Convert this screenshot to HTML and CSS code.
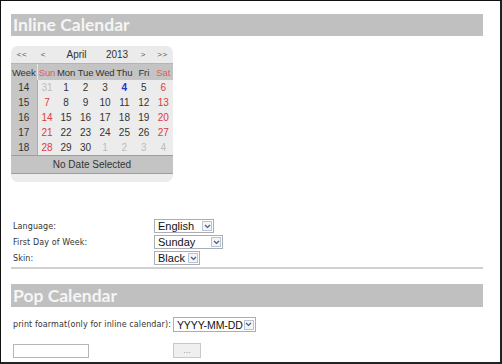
FILE: index.html
```html
<!DOCTYPE html>
<html>
<head>
<meta charset="utf-8">
<title>Calendar</title>
<link rel="stylesheet" href="styles.css">
</head>
<body>
<div class="frame">
  <h2 class="bar">Inline Calendar</h2>

  <div class="cal">
    <div class="cal-nav">
      <span class="n1">&lt;&lt;</span>
      <span class="n2">&lt;</span>
      <span class="n3">April</span>
      <span class="n4">2013</span>
      <span class="n5">&gt;</span>
      <span class="n6">&gt;&gt;</span>
    </div>
    <table class="cal-grid">
      <colgroup>
        <col class="c-week"><col><col><col><col><col><col><col>
      </colgroup>
      <thead>
        <tr class="head">
          <th class="wk">Week</th><th class="we first">Sun</th><th>Mon</th><th>Tue</th><th>Wed</th><th>Thu</th><th>Fri</th><th class="we">Sat</th>
        </tr>
      </thead>
      <tbody>
        <tr><td class="wk">14</td><td class="other first">31</td><td>1</td><td>2</td><td>3</td><td class="today">4</td><td>5</td><td class="we">6</td></tr>
        <tr><td class="wk">15</td><td class="we first">7</td><td>8</td><td>9</td><td>10</td><td>11</td><td>12</td><td class="we">13</td></tr>
        <tr><td class="wk">16</td><td class="we first">14</td><td>15</td><td>16</td><td>17</td><td>18</td><td>19</td><td class="we">20</td></tr>
        <tr><td class="wk">17</td><td class="we first">21</td><td>22</td><td>23</td><td>24</td><td>25</td><td>26</td><td class="we">27</td></tr>
        <tr><td class="wk">18</td><td class="we first">28</td><td>29</td><td>30</td><td class="other">1</td><td class="other">2</td><td class="other">3</td><td class="other">4</td></tr>
      </tbody>
    </table>
    <div class="cal-foot">No Date Selected</div>
  </div>

  <div class="options">
    <div class="row">
      <span class="label">Language:</span>
      <span class="select w-lang"><span class="val">English</span><span class="arrow"><svg width="7" height="5" viewBox="0 0 7 5"><path d="M1 1 L3.5 3.5 L6 1" fill="none" stroke="#4a5a7a" stroke-width="1.2"/></svg></span></span>
    </div>
    <div class="row">
      <span class="label">First Day of Week:</span>
      <span class="select w-day"><span class="val">Sunday</span><span class="arrow"><svg width="7" height="5" viewBox="0 0 7 5"><path d="M1 1 L3.5 3.5 L6 1" fill="none" stroke="#4a5a7a" stroke-width="1.2"/></svg></span></span>
    </div>
    <div class="row">
      <span class="label">Skin:</span>
      <span class="select w-skin"><span class="val">Black</span><span class="arrow"><svg width="7" height="5" viewBox="0 0 7 5"><path d="M1 1 L3.5 3.5 L6 1" fill="none" stroke="#4a5a7a" stroke-width="1.2"/></svg></span></span>
    </div>
  </div>
  <div class="rule"></div>

  <h2 class="bar bar2">Pop Calendar</h2>

  <div class="row fmt">
    <span class="label">print foarmat(only for inline calendar):</span>
    <span class="select w-fmt"><span class="val">YYYY-MM-DD</span><span class="arrow"><svg width="7" height="5" viewBox="0 0 7 5"><path d="M1 1 L3.5 3.5 L6 1" fill="none" stroke="#4a5a7a" stroke-width="1.2"/></svg></span></span>
  </div>

  <div class="pop-row">
    <span class="text-input"></span>
    <span class="btn">...</span>
  </div>
</div>
</body>
</html>
```

FILE: styles.css
```css
html, body {
  margin: 0;
  padding: 0;
  background: #fff;
}

.frame {
  width: 502px;
  height: 364px;
  box-sizing: border-box;
  border-left: 1px solid #111;
  border-top: 1px solid #111;
  border-right: 2px solid #222;
  border-bottom: 2px solid #222;
  padding: 13px 17px 0 10px;
  font-family: "DejaVu Sans", sans-serif;
  overflow: hidden;
}

.bar {
  margin: 0;
  height: 22px;
  line-height: 22px;
  background: #c0c0c0;
  color: #f5f5f5;
  font-family: "Lato", "Liberation Sans", sans-serif;
  font-weight: 700;
  font-size: 17.5px;
  padding-left: 2px;
}

/* calendar */
.cal {
  margin-top: 10px;
  width: 162px;
  background: #ececec;
  border-radius: 7px;
  padding-bottom: 8px;
  overflow: hidden;
  font-family: "Liberation Sans", sans-serif;
  font-size: 10px;
  color: #333;
}

.cal-nav {
  display: flex;
  height: 17px;
  align-items: center;
  background: #ebebeb;
}
.cal-nav span { text-align: center; }
.cal-nav .n1 { width: 22px; font-size: 8px; letter-spacing: 0.5px; color: #555; }
.cal-nav .n2 { width: 20px; font-size: 8px; color: #555; }
.cal-nav .n3 { width: 47px; }
.cal-nav .n4 { width: 34px; }
.cal-nav .n5 { width: 18px; font-size: 8px; color: #555; }
.cal-nav .n6 { width: 21px; font-size: 8px; letter-spacing: 0.5px; color: #555; }

.cal-grid {
  width: 162px;
  table-layout: fixed;
  border-collapse: collapse;
  border-spacing: 0;
}
.cal-grid .c-week { width: 26px; }
.cal-grid th, .cal-grid td {
  padding: 0;
  text-align: center;
  font-weight: normal;
  color: #333;
}
.cal-grid .head th {
  height: 16px;
  background: #c4c4c4;
  border-top: 1px solid #b4b4b4;
  font-size: 9.5px;
  letter-spacing: -0.1px;
}
.cal-grid .head th.first { border-left: 1px solid #e4e4e4; }
.cal-grid .head th.we { color: #e25a5a; }
.cal-grid tbody td { height: 15px; }
.cal-grid td.wk {
  background: #c6c6c6;
  border-right: 1px solid #adadad;
}
.cal-grid td.we { color: #d83c3c; }
.cal-grid td.other { color: #bcbcbc; }
.cal-grid td.today { color: #1c35c4; font-weight: bold; }

.cal-foot {
  height: 17px;
  line-height: 17px;
  background: #c4c4c4;
  border-top: 1px solid #9e9e9e;
  border-bottom: 1px solid #9e9e9e;
  text-align: center;
  color: #333;
}

/* options */
.options { margin-top: 36px; }
.row {
  display: flex;
  align-items: center;
  height: 16px;
}
.label {
  width: 143px;
  padding-left: 2px;
  box-sizing: border-box;
  font-family: "DejaVu Sans", sans-serif;
  font-size: 8px;
  color: #333;
  letter-spacing: 0.1px;
  white-space: nowrap;
}
.select {
  display: flex;
  align-items: center;
  height: 14px;
  box-sizing: border-box;
  border: 1px solid #a9aeb6;
  background: #fff;
  font-family: "Liberation Sans", sans-serif;
  font-size: 11px;
  color: #111;
  padding: 0 1px 0 3px;
  white-space: nowrap;
}
.select .val { flex: 1; line-height: 12px; overflow: hidden; }
.select .arrow {
  flex: none;
  width: 10px;
  height: 10px;
  box-sizing: border-box;
  border: 1px solid #b8c4d6;
  background: #f2f4f8;
  display: flex;
  align-items: center;
  justify-content: center;
}
.w-lang { width: 60px; }
.w-day { width: 69px; }
.w-skin { width: 46px; }
.w-fmt { width: 83px; height: 15px; }
.w-fmt .val { font-size: 10.5px; letter-spacing: -0.1px; }

.rule {
  margin-top: 1px;
  height: 2px;
  background: #d0d0d0;
}

.bar2 { margin-top: 15px; height: 23px; line-height: 23px; }

.fmt { margin-top: 9px; height: 17px; }
.fmt .label { width: auto; margin-right: 2px; }

.pop-row {
  display: flex;
  align-items: center;
  gap: 84px;
  margin-top: 10px;
  padding-left: 2px;
}
.text-input {
  width: 76px;
  height: 14px;
  box-sizing: border-box;
  border: 1px solid #b5b5b5;
  background: #fff;
}
.btn {
  width: 28px;
  height: 15px;
  box-sizing: border-box;
  border: 1px solid #c8c8c8;
  background: #efefef;
  color: #999;
  font-family: "Liberation Sans", sans-serif;
  font-size: 9px;
  line-height: 12px;
  text-align: center;
}
```
